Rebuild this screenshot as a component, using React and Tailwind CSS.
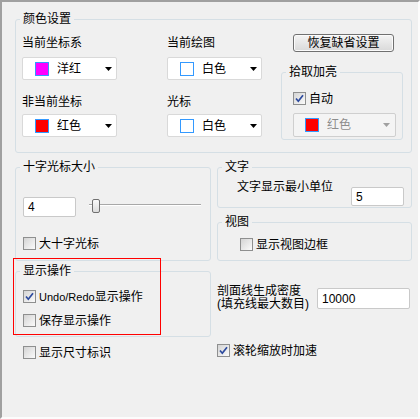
import React from 'react'

function Arrow({ gray }) {
  return (
    <svg width="7" height="4" viewBox="0 0 7 4" className="shrink-0">
      <path d="M0 0h7L3.5 4z" fill={gray ? '#a0a0a0' : '#000'} />
    </svg>
  )
}

function Check({ checked }) {
  return (
    <span className="w-[13px] h-[13px] shrink-0 border border-[#8e8f8f] bg-gradient-to-br from-[#d4d4d4] to-[#fbfbfb] flex items-center justify-center">
      {checked && (
        <svg width="9" height="9" viewBox="0 0 9 9">
          <path d="M1 4.5L3.3 7.2L8 1.2" stroke="#2c4a9e" strokeWidth="1.7" fill="none" />
        </svg>
      )}
    </span>
  )
}

function CheckRow({ checked, label, className = '' }) {
  return (
    <div className={`flex items-center gap-[3px] h-[13px] ${className}`}>
      <Check checked={checked} />
      <span className="leading-[14px] whitespace-nowrap">{label}</span>
    </div>
  )
}

function Group({ title, className = '', children }) {
  return (
    <div className={`border border-[#d5dfe5] rounded-[3px] ${className}`}>
      <div className="w-fit -mt-[8px] ml-[4px] px-[3px] bg-[#f0f0f0] leading-[14px] whitespace-nowrap">{title}</div>
      {children}
    </div>
  )
}

function ColorSelect({ swatch, label, className = '' }) {
  return (
    <div className={`h-[23px] bg-white border border-[#d9d9d9] rounded-[2px] flex items-center ${className}`}>
      <span className={`ml-[12px] w-[14px] h-[14px] border border-[#3399ff] ${swatch}`} />
      <span className="ml-[8px] leading-[14px]">{label}</span>
      <span className="ml-auto mr-[4px] flex"><Arrow /></span>
    </div>
  )
}

function Input({ value, className = '' }) {
  return (
    <div className={`bg-white border border-[#c9c9c9] rounded-[2px] pl-[4px] flex items-center leading-[14px] ${className}`}>
      {value}
    </div>
  )
}

export default function App() {
  return (
    <div className="relative w-[420px] h-[419px] overflow-hidden bg-[#f0f0f0] border-2 border-t-[#a0a0a0] border-l-[#a0a0a0] border-r-[#fcfcfc] border-b-[#fcfcfc] text-[12px] text-black font-['Liberation_Sans','Noto_Sans_CJK_SC',sans-serif]">
      <div className="pl-[13px] pt-[17px]">
        {/* 颜色设置 */}
        <Group title="颜色设置" className="w-[397px] h-[134px]">
          <div className="flex items-start">
            <div className="ml-[6px] w-[95px]">
              <div className="mt-[10px] leading-[14px]">当前坐标系</div>
              <ColorSelect swatch="bg-[#ff00ff]" label="洋红" className="mt-[7px]" />
              <div className="mt-[15px] leading-[14px]">非当前坐标</div>
              <ColorSelect swatch="bg-[#ff0000]" label="红色" className="mt-[5px]" />
            </div>
            <div className="ml-[50px] w-[95px]">
              <div className="mt-[10px] leading-[14px]">当前绘图</div>
              <ColorSelect swatch="bg-white" label="白色" className="mt-[7px]" />
              <div className="mt-[15px] leading-[14px]">光标</div>
              <ColorSelect swatch="bg-white" label="白色" className="mt-[5px]" />
            </div>
            <div className="ml-[19px] w-[122px]">
              <div className="ml-[12px] mt-[8px] w-[101px] h-[18px] border border-[#707070] rounded-[3px] bg-gradient-to-b from-[#f4f4f4] to-[#d9d9d9] shadow-[inset_0_0_0_1px_#fbfbfb] flex items-center justify-center leading-[14px]">
                恢复缺省设置
              </div>
              <Group title="拾取加亮" className="mt-[20px] w-[122px] h-[68px]">
                <CheckRow checked label="自动" className="mt-[13px] ml-[11px]" />
                <div className="mt-[8px] ml-[11px] w-[103px] h-[24px] bg-[#f4f4f4] border border-[#cfcfcf] rounded-[2px] flex items-center">
                  <span className="ml-[11px] w-[14px] h-[14px] border border-[#3399ff] bg-[#ff0000]" />
                  <span className="ml-[8px] leading-[14px] text-[#8d8d8d]">红色</span>
                  <span className="ml-auto mr-[5px] flex"><Arrow gray /></span>
                </div>
              </Group>
            </div>
          </div>
        </Group>

        <div className="flex mt-[14px]">
          {/* left column */}
          <div className="w-[196px]">
            <Group title="十字光标大小" className="h-[94px]">
              <div className="flex items-start mt-[23px]">
                <Input value="4" className="ml-[7px] w-[53px] h-[20px]" />
                <div className="relative ml-[13px] w-[112px] h-[20px]">
                  <div className="mt-[7px] h-[2px] border-t border-[#a8a8a8] bg-white" />
                  <div className="absolute left-[3px] top-[2px] w-[8px] h-[14px] border border-[#707070] rounded-[2px] bg-gradient-to-b from-[#fafafa] to-[#dcdcdc]" />
                </div>
              </div>
              <CheckRow label="大十字光标" className="mt-[20px] ml-[7px]" />
            </Group>
            <Group title="显示操作" className="mt-[10px] h-[66px]">
              <CheckRow
                checked
                label={<><span className="text-[11px]">Undo/Redo</span>显示操作</>}
                className="mt-[12px] ml-[7px]"
              />
              <CheckRow label="保存显示操作" className="mt-[11px] ml-[7px]" />
            </Group>
            <CheckRow label="显示尺寸标识" className="mt-[9px] ml-[8px]" />
          </div>

          {/* right column */}
          <div className="ml-[6px] w-[195px]">
            <Group title="文字" className="h-[41px]">
              <div className="flex items-start">
                <div className="ml-[19px] mt-[6px] leading-[14px]">文字显示最小单位</div>
                <Input value="5" className="ml-auto mr-[7px] mt-[13px] w-[53px] h-[19px]" />
              </div>
            </Group>
            <Group title="视图" className="mt-[14px] h-[39px]">
              <CheckRow label="显示视图边框" className="mt-[9px] ml-[22px]" />
            </Group>
            <div className="flex items-start mt-[24px]">
              <div className="leading-[13px]">
                <div>剖面线生成密度</div>
                <div>(填充线最大数目)</div>
              </div>
              <Input value="10000" className="ml-auto mr-[2px] mt-[3px] w-[93px] h-[21px]" />
            </div>
            <CheckRow checked label="滚轮缩放时加速" className="mt-[33px]" />
          </div>
        </div>
      </div>

      {/* red annotation frame */}
      <div className="absolute left-[11px] top-[256px] w-[148px] h-[77px] border border-[#ff0000]" />
    </div>
  )
}
